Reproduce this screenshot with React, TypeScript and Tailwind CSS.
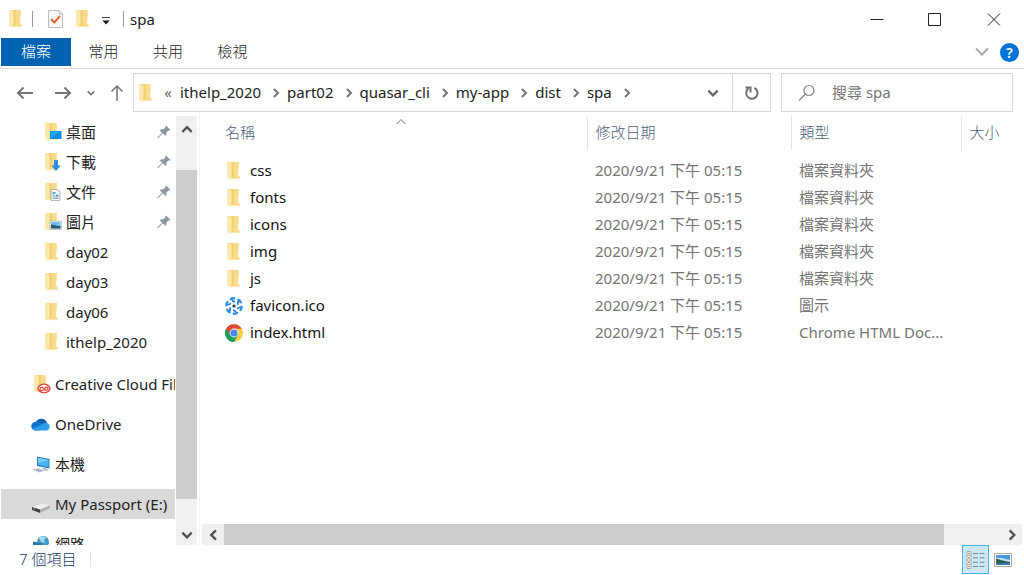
import type { ReactNode } from 'react';

function Folder({ children }: { children?: ReactNode }) {
  return (
    <svg viewBox="0 0 20 20" className="h-5 w-5 shrink-0">
      <path d="M3.500 1H14.500v7l-.4.800V15l1.400.600V17.500H4z" fill="#f6d377" />
      <path d="M10 1h4.500v7l-.4.800V15l1.400.600V17.500H10z" fill="#f9dc8b" />
      <path d="M3 1.500 4 1l4 1.500v13l-1 .8V19L3 16.500z" fill="#fde9ad" />
      <path d="M8 2.500v13l-1 .8" fill="none" stroke="#ecc464" strokeWidth=".6" />
      {children}
    </svg>
  );
}

function Chevron({ dir, className }: { dir: 'up' | 'down' | 'left' | 'right'; className: string }) {
  const paths = {
    up: 'M2 8.500 6 4.500l4 4',
    down: 'M2 4 6 8l4-4',
    left: 'M8.500 2 4.500 6l4 4',
    right: 'M4 2l4 4-4 4',
  };
  return (
    <svg viewBox="0 0 12 12" className={className} fill="none" stroke="currentColor" strokeWidth="2">
      <path d={paths[dir]} />
    </svg>
  );
}

function Pin() {
  return (
    <svg viewBox="0 0 14 14" className="h-3.5 w-3.5 shrink-0" fill="#8b979f">
      <path d="M9 .5 13.500 5l-1.300.7-.8-.3-2 2.200c.3 1.400 0 2.500-.9 3.400L5.800 8.300 1.300 13l-.9.2.2-.9 4.600-4.500L2.700 5.300c.9-.9 2-1.200 3.400-.9l2.300-2-.2-.8z" />
    </svg>
  );
}

function QuasarIcon() {
  return (
    <svg viewBox="0 0 20 20" className="h-5 w-5 shrink-0" fill="none">
      {[0, 60, 120, 180, 240, 300].map((deg) => (
        <g key={deg} transform={`rotate(${deg} 10 10)`}>
          <path d="M6.300 4C7.200 2.200 9 1.900 11.200 2.600" stroke="#2a8fe6" strokeWidth="2.200" />
          <path d="M8 3.300c.2 1.300 1 2.300 3 2.500" stroke="#1a76d2" strokeWidth="1.500" />
        </g>
      ))}
      <circle cx="10" cy="10" r="1.600" fill="#263f5c" />
    </svg>
  );
}

function ChromeIcon() {
  return (
    <svg viewBox="0 0 20 20" className="h-5 w-5 shrink-0">
      <circle cx="10" cy="10" r="9" fill="#ffcd42" />
      <path d="M10 10 2.200 5.500A9 9 0 0 0 10 19l4-7z" fill="#1a9f5d" />
      <path d="M2.200 5.500A9 9 0 0 1 17.800 5.800H10L6.200 12z" fill="#dc4a3d" />
      <circle cx="10" cy="10" r="4.400" fill="#f4f4f4" />
      <circle cx="10" cy="10" r="3.600" fill="#4688f1" />
    </svg>
  );
}

function CloudIcon() {
  return (
    <svg viewBox="0 0 20 14" className="h-3.5 w-5 shrink-0">
      <path d="M5 5A6 6 0 0 1 16 6L12 9 4 8z" fill="#0a5fb4" />
      <path d="M4.500 13.500A4.400 4.400 0 0 1 4.800 4.700c1.400-.2 2.500.1 3.600.8L14 9l-6 4.500z" fill="#1175cf" />
      <path d="M11 7.500c1.300-1.500 3-2 4.600-1.500A3.900 3.900 0 0 1 16 13.500H4.500c-1.400 0-2.600-.7-3.400-1.700z" fill="#2a9ce8" />
    </svg>
  );
}

function ComputerIcon() {
  return (
    <svg viewBox="0 0 20 20" className="h-5 w-5 shrink-0">
      <path d="M6 2.500 18.500 5v9.500L6 12z" fill="#2878b5" />
      <path d="M7 3.800 17.600 6v7.300L7 11.100z" fill="#48b5f3" />
      <path d="M7 3.800 17.600 6 7 9z" fill="#7bcffa" />
      <path d="M11 13.500 15 14.300 18 17l-5-.5z" fill="#b1bcc4" />
      <path d="M1 15.500 7.500 14.300 14 16.500 7.500 18.500z" fill="#c6cdd2" />
      <path d="M3.200 15.800 9.500 17.400M5.500 15.300 11.500 17" stroke="#8b989f" strokeWidth=".6" />
    </svg>
  );
}

function DriveIcon() {
  return (
    <svg viewBox="0 0 20 20" className="h-5 w-5 shrink-0">
      <path d="M1 13 11 9.500l8 2-10 4z" fill="#eeeeee" />
      <path d="M1 13 9 15.500v3.500l-8-3z" fill="#414542" />
      <path d="M9 15.500 19 11.500v2.500L9 19z" fill="#aaaead" />
      <circle cx="3" cy="15" r=".7" fill="#65c466" />
    </svg>
  );
}

function NetworkIcon() {
  return (
    <svg viewBox="0 0 20 20" className="h-5 w-5 shrink-0">
      <circle cx="12" cy="8" r="6" fill="#3e9bc8" />
      <path d="M8 4c2-2 5-2 7 0l-2 2 1 3-4-1z" fill="#a9d9ea" />
      <path d="M2 7.500 11 9.500v6l-9-2z" fill="#2878a5" />
      <path d="M1 16l6-1.500 7 2-6 2z" fill="#c6cdd2" />
    </svg>
  );
}

const places = [
  {
    name: '桌面',
    pinned: true,
    icon: (
      <Folder>
        <path d="M8 9h11.500v8H8z" fill="#128de1" />
        <path d="M8.700 9.700h10.100L8.700 16z" fill="#1fa4f5" />
      </Folder>
    ),
  },
  {
    name: '下載',
    pinned: true,
    icon: (
      <Folder>
        <path d="M12 8h4v5.500h2.800L14 19l-4.800-5.500H12z" fill="#2f8de4" />
      </Folder>
    ),
  },
  {
    name: '文件',
    pinned: true,
    icon: (
      <Folder>
        <path d="M9 7.500h6.500L18 10v8.500H9z" fill="#f5f7f8" stroke="#94a1a8" strokeWidth=".7" />
        <path d="M10.500 10h3v2h-3zM14 12.500h2.500v2H14z" fill="#50a9dc" />
        <path d="M10.500 13.500h2.500M10.500 15h6M10.500 16.500h6" stroke="#7896a9" strokeWidth=".8" />
      </Folder>
    ),
  },
  {
    name: '圖片',
    pinned: true,
    icon: (
      <Folder>
        <path d="M8 9h11.500v8.500H8z" fill="#f1f3f4" stroke="#a9b0b5" strokeWidth=".6" />
        <path d="M9 10h9.500v6.500H9z" fill="#75bdf0" />
        <path d="M9 12.500c4 0 6 2 9.500 1.500v2.500H9z" fill="#285f76" />
      </Folder>
    ),
  },
  { name: 'day02', pinned: false, icon: <Folder /> },
  { name: 'day03', pinned: false, icon: <Folder /> },
  { name: 'day06', pinned: false, icon: <Folder /> },
  { name: 'ithelp_2020', pinned: false, icon: <Folder /> },
];

const roots = [
  {
    name: 'Creative Cloud Files',
    icon: (
      <Folder>
        <ellipse cx="13" cy="14.500" rx="6" ry="4.300" fill="#fff0ed" stroke="#e34335" strokeWidth="1.300" />
        <path d="M12.500 14.500c-1-2-4-1-3.500 1s3 1.500 4 0l1-1.500c1.300-1.500 3.500-.5 3 1s-2.500 1.500-3.500.5" fill="none" stroke="#e34335" strokeWidth="1.200" />
      </Folder>
    ),
  },
  { name: 'OneDrive', icon: <CloudIcon /> },
  { name: '本機', icon: <ComputerIcon /> },
  { name: 'My Passport (E:)', icon: <DriveIcon />, selected: true },
  { name: '網路', icon: <NetworkIcon /> },
];

const crumbs = ['ithelp_2020', 'part02', 'quasar_cli', 'my-app', 'dist', 'spa'];

const files = [
  { name: 'css', type: '檔案資料夾', icon: <Folder /> },
  { name: 'fonts', type: '檔案資料夾', icon: <Folder /> },
  { name: 'icons', type: '檔案資料夾', icon: <Folder /> },
  { name: 'img', type: '檔案資料夾', icon: <Folder /> },
  { name: 'js', type: '檔案資料夾', icon: <Folder /> },
  { name: 'favicon.ico', type: '圖示', icon: <QuasarIcon /> },
  { name: 'index.html', type: 'Chrome HTML Doc...', icon: <ChromeIcon /> },
];

function TitleBar() {
  return (
    <header className="flex h-[37px] shrink-0 items-center pl-1.5">
      <Folder />
      <span className="ml-1.5 h-4 w-px bg-[#999]" />
      <button aria-label="內容" className="ml-3.5">
        <svg viewBox="0 0 18 20" className="h-5 w-[18px]">
          <path d="M1.500 1.500h10.500l3.500 3.500v13.500h-14z" fill="#f7f8f9" stroke="#b9bdc2" />
          <path d="M12 1.500V5h3.500" fill="none" stroke="#b9bdc2" />
          <path d="m4 10 3.300 3.500L13 7" fill="none" stroke="#e8622c" strokeWidth="2" />
        </svg>
      </button>
      <button aria-label="新增資料夾" className="ml-2">
        <Folder />
      </button>
      <button aria-label="自訂快速存取工具列" className="ml-2">
        <svg viewBox="0 0 10 10" className="mt-1 h-2.5 w-2.5">
          <path d="M1 1.500h8" stroke="#444" />
          <path d="M1.500 4.500h7L5 8.500z" fill="#111" />
        </svg>
      </button>
      <span className="ml-3 h-4 w-px bg-[#999]" />
      <h1 className="ml-1.5">spa</h1>
      <div className="ml-auto flex text-[#222]">
        <button aria-label="最小化" className="flex w-[58px] justify-center">
          <svg viewBox="0 0 14 14" className="h-3.5 w-3.5" stroke="currentColor">
            <path d="M.5 7.500h13" />
          </svg>
        </button>
        <button aria-label="最大化" className="flex w-[58px] justify-center">
          <svg viewBox="0 0 14 14" className="h-3.5 w-3.5" fill="none" stroke="currentColor">
            <path d="M.5 1.500h12v12H.5z" />
          </svg>
        </button>
        <button aria-label="關閉" className="flex w-[60px] justify-center">
          <svg viewBox="0 0 14 14" className="h-3.5 w-3.5" stroke="currentColor">
            <path d="m1 1.500 12 12M13 1.500l-12 12" />
          </svg>
        </button>
      </div>
    </header>
  );
}

function Ribbon() {
  return (
    <div className="flex h-8 shrink-0 items-start border-b border-[#dadbdc] pt-px pl-px font-light text-[#222]">
      <button className="h-7 w-[70px] bg-[#0063b1] pb-0.5 text-white">檔案</button>
      <button className="h-7 w-[65px] pb-0.5">常用</button>
      <button className="h-7 w-16 pb-0.5">共用</button>
      <button className="h-7 w-[65px] pb-0.5">檢視</button>
      <div className="ml-auto flex h-7 items-center gap-2.5 pr-[5px]">
        <button aria-label="展開功能區">
          <svg viewBox="0 0 16 10" className="h-2.5 w-4" fill="none" stroke="#aaa" strokeWidth="2">
            <path d="m2 1.500 6 6 6-6" />
          </svg>
        </button>
        <button aria-label="說明" className="h-[19px] w-[19px] rounded-full bg-[#0074d6] text-sm leading-[19px] font-semibold text-white">
          ?
        </button>
      </div>
    </div>
  );
}

function AddressBar() {
  return (
    <div className="flex shrink-0 items-center pt-1 pr-[11px]">
      <div className="flex w-[133px] shrink-0 items-center text-[#757575]">
        <button aria-label="上一頁" className="ml-4">
          <svg viewBox="0 0 18 14" className="h-3.5 w-[18px]" fill="none" stroke="currentColor" strokeWidth="2">
            <path d="M17 7H2M7.500 1.500 2 7l5.500 5.500" />
          </svg>
        </button>
        <button aria-label="下一頁" className="ml-5">
          <svg viewBox="0 0 18 14" className="h-3.5 w-[18px]" fill="none" stroke="currentColor" strokeWidth="2">
            <path d="M1 7h15M10.500 1.500 16 7l-5.500 5.500" />
          </svg>
        </button>
        <button aria-label="最近的位置" className="ml-3.5">
          <Chevron dir="down" className="h-2.5 w-2.5" />
        </button>
        <button aria-label="上移" className="ml-3.5">
          <svg viewBox="0 0 14 18" className="h-[18px] w-3.5" fill="none" stroke="currentColor" strokeWidth="1.500">
            <path d="M7 17V2M1.500 7.500 7 2l5.500 5.500" />
          </svg>
        </button>
      </div>
      <nav aria-label="路徑" className="flex h-[39px] min-w-0 flex-1 items-center border border-[#d9d9d9] pl-0.5">
        <Folder />
        <span className="w-6 pb-0.5 text-center text-[#666]">«</span>
        {crumbs.map((crumb) => (
          <span key={crumb} className="flex items-center">
            <a href="#" className="pb-0.5">{crumb}</a>
            <span className="flex w-[26px] justify-center pl-1 text-[#777]">
              <Chevron dir="right" className="h-3 w-3" />
            </span>
          </span>
        ))}
        <button aria-label="先前的位置" className="mr-3 ml-auto text-[#666]">
          <Chevron dir="down" className="h-3.5 w-3.5" />
        </button>
        <button aria-label="重新整理" className="flex h-full w-[38px] items-center justify-center border-l border-[#d9d9d9] text-[#707070]">
          <svg viewBox="0 0 16 16" className="h-4 w-4" fill="none" stroke="currentColor" strokeWidth="2">
            <path d="M10.500 3A5.700 5.700 0 1 1 4.500 3.500M1.500 2.500h5v5" />
          </svg>
        </button>
      </nav>
      <label className="ml-2.5 flex h-[39px] w-[232px] items-center border border-[#d9d9d9] pl-4">
        <svg viewBox="0 0 18 18" className="h-[18px] w-[18px] shrink-0" fill="none" stroke="#888" strokeWidth="1.200">
          <circle cx="11" cy="6.500" r="5" />
          <path d="M7.500 10 1 16.500" />
        </svg>
        <input type="text" aria-label="搜尋" placeholder="搜尋 spa" className="ml-4 w-full min-w-0 pb-0.5 outline-none placeholder:text-[#757575]" />
      </label>
    </div>
  );
}

function Sidebar() {
  return (
    <aside className="flex w-[200px] shrink-0 border-r border-[#f3f3f3] pt-1">
      <div className="w-[175px] overflow-hidden">
        <ul className="pt-px pb-3">
          {places.map((place) => (
            <li key={place.name}>
              <a href="#" className="flex h-[30px] items-center pr-1 pl-[42px]">
                {place.icon}
                <span className="ml-1 flex-1">{place.name}</span>
                {place.pinned && <Pin />}
              </a>
            </li>
          ))}
        </ul>
        <ul className="space-y-2.5">
          {roots.map((root) => (
            <li key={root.name}>
              <a href="#" className={`ml-px flex h-[30px] items-center pl-[30px] whitespace-nowrap ${root.selected ? 'bg-[#d9d9d9]' : ''}`}>
                {root.icon}
                <span className="ml-1">{root.name}</span>
              </a>
            </li>
          ))}
        </ul>
      </div>
      <div className="ml-px flex w-[21px] flex-col bg-[#f0f0f0] text-[#505050]">
        <button aria-label="向上捲動" className="flex h-7 justify-center pt-1.5">
          <Chevron dir="up" className="h-3.5 w-3.5" />
        </button>
        <div className="mt-[26px] flex-1 bg-[#cdcdcd]" />
        <button aria-label="向下捲動" className="mt-[25px] flex h-[21px] justify-center pt-1">
          <Chevron dir="down" className="h-3.5 w-3.5" />
        </button>
      </div>
    </aside>
  );
}

function FileList() {
  return (
    <main className="flex min-w-0 flex-1 flex-col pr-0.5 pl-0.5">
      <div className="min-h-0 flex-1 overflow-hidden pt-1 pl-3.5">
        <table className="w-full table-fixed text-left">
          <thead className="text-[#4c607a]">
            <tr className="h-[34px]">
              <th className="relative w-[371px] border-r border-[#e5e5e5] pb-0.5 pl-[9px] font-light">
                <svg viewBox="0 0 12 7" className="absolute top-0.5 left-1/2 h-[7px] w-3 -translate-x-1/2" fill="none" stroke="#777">
                  <path d="m1.500 6 4.500-4.500L10.500 6" />
                </svg>
                名稱
              </th>
              <th className="w-[204px] border-r border-[#e5e5e5] pb-0.5 pl-2 font-light">修改日期</th>
              <th className="w-[170px] border-r border-[#e5e5e5] pb-0.5 pl-2 font-light">類型</th>
              <th className="pb-0.5 pl-2 font-light">大小</th>
            </tr>
          </thead>
          <tbody className="text-[#757575] before:block before:h-[7px]">
            {files.map((file) => (
              <tr key={file.name} className="h-[27px]">
                <td className="pl-2">
                  <a href="#" className="flex items-center text-[#111]">
                    {file.icon}
                    <span className="ml-1.5 pb-0.5">{file.name}</span>
                  </a>
                </td>
                <td className="pb-0.5 pl-2">2020/9/21 下午 05:15</td>
                <td className="truncate pb-0.5 pl-2">{file.type}</td>
                <td />
              </tr>
            ))}
          </tbody>
        </table>
      </div>
      <div className="flex h-[21px] shrink-0 items-center bg-[#f0f0f0] text-[#505050]">
        <button aria-label="向左捲動" className="flex w-[22px] justify-center">
          <Chevron dir="left" className="h-3.5 w-3.5" />
        </button>
        <div className="h-full flex-1 bg-[#cdcdcd]" />
        <button aria-label="向右捲動" className="ml-[57px] flex w-[21px] justify-center">
          <Chevron dir="right" className="h-3.5 w-3.5" />
        </button>
      </div>
    </main>
  );
}

function StatusBar() {
  return (
    <footer className="flex h-[30px] shrink-0 items-start pr-2 font-light text-[#1e3a66]">
      <span className="pt-1 pl-[19px]">7 個項目</span>
      <span className="mt-1.5 ml-3.5 h-4 w-px bg-[#e5e5e5]" />
      <button aria-label="詳細資料" className="ml-auto flex h-[29px] w-[27px] items-center justify-center border border-[#45b4e4] bg-[#cce8f6]">
        <svg viewBox="0 0 19 18" className="h-[18px] w-[19px] shrink-0">
          <path d="M1 .5h4v17H1zM1 4.500h4M1 9h4M1 13.500h4" fill="#fff" stroke="#9a9a9a" strokeWidth=".8" />
          <path d="M2.300 2.500h1.400M2.300 6.800h1.400M2.300 15.500h1.400" stroke="#897c54" strokeWidth="1.400" />
          <path d="M2.300 11.300h1.400" stroke="#d34a2d" strokeWidth="1.600" />
          <path d="M7 2.500h5M13.500 2.500h5M7 6.800h5M13.500 6.800h5M7 11.300h5M13.500 11.300h5M7 15.500h5M13.500 15.500h5" stroke="#7b8a92" />
        </svg>
      </button>
      <button aria-label="大圖示" className="flex h-[29px] w-[27px] items-center justify-center">
        <svg viewBox="0 0 18 14" className="h-3.5 w-[18px]">
          <path d="M.5.5h17v13H.5z" fill="#fff" stroke="#aaa" />
          <path d="M2 2h14v10H2z" fill="#4a98e4" />
          <path d="M2 5c4-1 8 1 14 2v2H2z" fill="#c6e5f4" />
          <path d="M2 6c4 0 6 2 14 3v3H2z" fill="#286052" />
          <path d="M2 10.500c5-1 9-.5 14-.5v2H2z" fill="#397bb3" />
        </svg>
      </button>
    </footer>
  );
}

export default function App() {
  return (
    <div className="flex h-screen flex-col overflow-hidden bg-white font-['Noto_Sans','Noto_Sans_CJK_TC',sans-serif] text-[15px] leading-5 text-[#222]">
      <TitleBar />
      <Ribbon />
      <AddressBar />
      <div className="flex min-h-0 flex-1">
        <Sidebar />
        <FileList />
      </div>
      <StatusBar />
    </div>
  );
}
